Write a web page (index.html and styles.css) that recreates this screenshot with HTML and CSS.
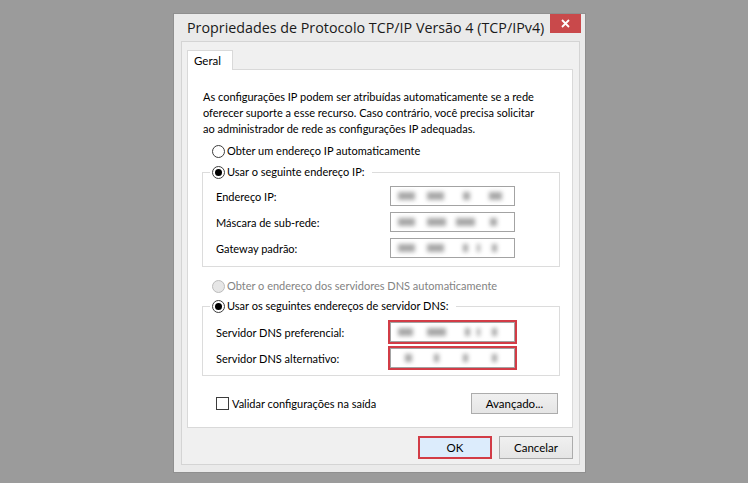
FILE: index.html
```html
<!DOCTYPE html>
<html lang="pt-BR">
<head>
  <meta charset="UTF-8">
  <title>Propriedades de Protocolo TCP/IP Versão 4 (TCP/IPv4)</title>
  <link rel="stylesheet" href="styles.css">
</head>
<body>
  <div class="window">
    <div class="titlebar">
      <span class="title">Propriedades de Protocolo TCP/IP Versão 4 (TCP/IPv4)</span>
      <span class="close">
        <svg width="9" height="9" viewBox="0 0 9 9"><path d="M1 1 L8 8 M8 1 L1 8" stroke="#fff" stroke-width="1.8"/></svg>
      </span>
    </div>

    <div class="client">
      <div class="tabs">
        <span class="tab">Geral</span>
      </div>
      <div class="panel">
        <p class="intro">As configurações IP podem ser atribuídas automaticamente se a rede<br>oferecer suporte a esse recurso. Caso contrário, você precisa solicitar<br>ao administrador de rede as configurações IP adequadas.</p>

        <div class="option"><span class="radio"></span>Obter um endereço IP automaticamente</div>

        <fieldset class="group">
          <legend class="option"><span class="radio checked"></span>Usar o seguinte endereço IP:</legend>
          <div class="row">
            <span class="label">Endereço IP:</span>
            <div class="ip">
              <span class="cell"><i class="o w17"></i></span>
              <span class="cell"><i class="o w17"></i></span>
              <span class="cell"><i class="o w7 m7"></i></span>
              <span class="cell"><i class="o w13 m4"></i></span>
            </div>
          </div>
          <div class="row">
            <span class="label">Máscara de sub-rede:</span>
            <div class="ip">
              <span class="cell"><i class="o w17"></i></span>
              <span class="cell"><i class="o w19"></i></span>
              <span class="cell"><i class="o w19"></i></span>
              <span class="cell"><i class="o w7 m5"></i></span>
            </div>
          </div>
          <div class="row">
            <span class="label">Gateway padrão:</span>
            <div class="ip">
              <span class="cell"><i class="o w17"></i></span>
              <span class="cell"><i class="o w17"></i></span>
              <span class="cell"><i class="o w5 m7"></i><i class="o w3 m9"></i></span>
              <span class="cell"><i class="o w5 m7"></i></span>
            </div>
          </div>
        </fieldset>

        <div class="option disabled"><span class="radio"></span>Obter o endereço dos servidores DNS automaticamente</div>

        <fieldset class="group dns">
          <legend class="option"><span class="radio checked"></span>Usar os seguintes endereços de servidor DNS:</legend>
          <div class="row">
            <span class="label">Servidor DNS preferencial:</span>
            <div class="ip marked">
              <span class="cell"><i class="o w15"></i></span>
              <span class="cell"><i class="o w19"></i></span>
              <span class="cell"><i class="o w5 m9"></i><i class="o w3 m7"></i></span>
              <span class="cell"><i class="o w5 m7"></i></span>
            </div>
          </div>
          <div class="row">
            <span class="label">Servidor DNS alternativo:</span>
            <div class="ip marked">
              <span class="cell"><i class="o w7 m7"></i></span>
              <span class="cell"><i class="o w5 m7"></i></span>
              <span class="cell"><i class="o w5 m7"></i></span>
              <span class="cell"><i class="o w5 m7"></i></span>
            </div>
          </div>
        </fieldset>

        <div class="panel-footer">
          <label class="check"><span class="box"></span>Validar configurações na saída</label>
          <button class="btn advanced">Avançado...</button>
        </div>
      </div>

      <div class="actions">
        <button class="btn default">OK</button>
        <button class="btn">Cancelar</button>
      </div>
    </div>
  </div>
</body>
</html>
```

FILE: styles.css
```css
body {
  margin: 0;
  background: #9b9b9b;
  font-family: Lato, "Open Sans", sans-serif;
  font-size: 11px;
  color: #000;
}
.window {
  box-sizing: border-box;
  width: 413px;
  height: 460px;
  margin: 13px 0 0 173px;
  padding: 0 5px 7px 7px;
  background: #eaeaea;
  border: 1px solid #8f8f8f;
  display: flex;
  flex-direction: column;
}
.titlebar {
  height: 27px;
  display: flex;
  align-items: flex-start;
}
.title {
  padding-left: 6px;
  font-family: "Open Sans", sans-serif;
  font-size: 14.3px;
  line-height: 27px;
  color: #1a1a1a;
}
.close {
  margin-left: auto;
  margin-right: -1px;
  width: 31px;
  height: 19px;
  background: #c9494b;
  display: flex;
  align-items: center;
  justify-content: center;
}
.client {
  flex: 1;
  background: #f0f0f0;
  border: 1px solid #d4d4d4;
  padding: 8px 6px 0 5px;
}
.tabs {
  height: 19px;
  display: flex;
}
.tab {
  box-sizing: border-box;
  width: 46px;
  height: 20px;
  padding-left: 6px;
  line-height: 19px;
  font-size: 11.5px;
  background: #fff;
  border: 1px solid #d9d9d9;
  border-bottom: none;
  position: relative;
  z-index: 1;
}
.panel {
  box-sizing: border-box;
  height: 359px;
  background: #fff;
  border: 1px solid #d9d9d9;
  padding: 19px 0 0 15px;
}
.intro {
  margin: 0;
  line-height: 16px;
  white-space: nowrap;
}
.option {
  display: flex;
  align-items: center;
  height: 16px;
  line-height: 16px;
  margin: 6px 0 0 9px;
}
.option.disabled {
  color: #838383;
  margin-top: 11px;
}
.radio {
  box-sizing: border-box;
  width: 13px;
  height: 13px;
  margin-right: 2px;
  border: 1px solid #3c3c3c;
  border-radius: 50%;
  background: #fff;
  display: flex;
  align-items: center;
  justify-content: center;
}
.radio.checked::after {
  content: "";
  width: 7px;
  height: 7px;
  border-radius: 50%;
  background: #000;
}
.disabled .radio {
  border-color: #bcbcbc;
  background: #e6e6e6;
}
.group {
  box-sizing: border-box;
  width: 358px;
  margin: 5px 0 0 -1px;
  padding: 3px 13px 5px;
  border: 1px solid #dcdcdc;
}
.group legend.option {
  margin: 0 0 0 -6px;
  padding: 0 7px 0 2px;
}
.group.dns {
  margin-top: 4px;
  padding-top: 5px;
  padding-bottom: 4px;
}
.row {
  height: 26px;
  display: flex;
  align-items: center;
}
.label {
  width: 174px;
}
.ip {
  box-sizing: border-box;
  width: 125px;
  height: 20px;
  border: 1px solid #a3a3a3;
  padding-left: 7px;
  display: flex;
  align-items: center;
}
.ip.marked {
  outline: 2px solid #d23c46;
}
.cell {
  width: 30px;
  display: flex;
}
/* blurred octets */
.o {
  display: block;
  height: 8px;
  background: #a8a8a8;
  filter: blur(2px);
}
.w3 { width: 3px; }
.w5 { width: 5px; }
.w7 { width: 7px; }
.w13 { width: 13px; }
.w15 { width: 15px; }
.w17 { width: 17px; }
.w19 { width: 19px; }
.m4 { margin-left: 4px; }
.m5 { margin-left: 5px; }
.m7 { margin-left: 7px; }
.m9 { margin-left: 9px; }
.panel-footer {
  display: flex;
  align-items: center;
  justify-content: space-between;
  margin: 17px 14px 0 13px;
}
.check {
  display: flex;
  align-items: center;
}
.box {
  box-sizing: border-box;
  width: 13px;
  height: 13px;
  margin-right: 3px;
  border: 1px solid #3c3c3c;
  background: #fff;
}
.btn {
  box-sizing: border-box;
  height: 21px;
  padding: 0;
  font-family: inherit;
  font-size: 11.5px;
  color: #000;
  border: 1px solid #acacac;
  background: linear-gradient(#f0f0f0, #e5e5e5);
}
.advanced {
  width: 87px;
}
.actions {
  display: flex;
  justify-content: flex-end;
  gap: 7px;
  margin-top: 8px;
}
.actions .btn {
  width: 74px;
  height: 23px;
}
.btn.default {
  background: #dcecfc;
  border: 2px solid #d23c46;
}
```
